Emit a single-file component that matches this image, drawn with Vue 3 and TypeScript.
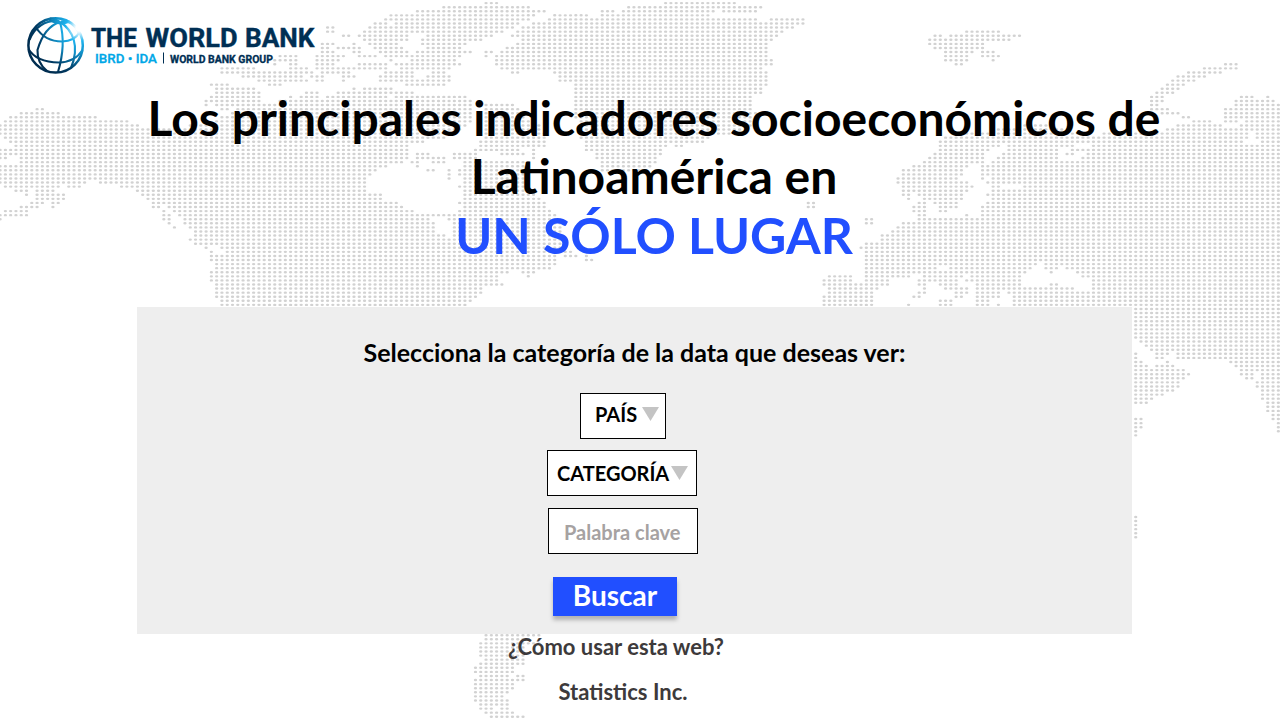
<script setup lang="ts">
import { ref } from 'vue'

const keyword = ref('')

// Dotted world map: each entry is "row: from-to from-to ..." where the
// from/to values are horizontal extents of land on that row.
const land = `
0: 487-497 665-735
1: 444-528 628-760
2: 417-545 603-613 625-712 724-756
3: 391-533 554-587 603-618 623-708
4: 385-517 523-528 550-757 772-803
5: 375-388 397-517 533-803
6: 328-333 370-390 397-510 523-793
7: 328-333 364-502 517-783 967-998
8: 344-349 359-407 428-492 512-777 935-940 951-1020
9: 364-407 423-482 522-772 930-1010
10: 323-333 354-354 370-397 423-465 517-767 930-982
11: 323-328 338-357 375-402 428-458 507-767 935-982
12: 323-333 354-359 380-407 417-470 487-492 502-767 945-972 982-993
13: 280-297 317-333 338-344 359-375 385-402 407-458 487-487 497-767 945-967 982-998
14: 275-297 317-338 391-391 412-453 497-772 945-967 993-993
15: 275-275 290-297 317-333 359-387 397-460 497-772 956-961 1226-1237
16: 222-253 290-307 317-354 359-387 403-450 502-762 1204-1237
17: 222-267 275-312 323-349 385-412 433-443 512-518 555-767 1189-1220
18: 243-302 310-323 344-353 380-412 428-450 560-767 1178-1205
19: 260-307 317-323 344-344 380-448 560-767 1173-1194
20: 211-227 269-280 407-445 575-767 1167-1183
21: 217-255 354-354 365-392 575-762 1162-1178
22: 217-260 307-318 338-359 365-392 397-412 575-762 1157-1167 1173-1173
23: 212-260 291-291 302-318 328-338 344-385 397-448 453-465 575-752 1152-1162 1242-1252 1268-1268
24: 206-260 278-470 575-752 1152-1162 1237-1257 1263-1273
25: 206-206 217-260 265-470 485-510 575-752 1152-1157 1237-1257 1263-1280
26: 37-42 222-228 238-470 485-515 575-752 1152-1167 1226-1280
27: 22-58 235-470 485-520 575-757 1162-1178 1226-1242 1247-1280
28: 11-97 222-470 485-525 575-757 1183-1190 1226-1280
29: 5-128 217-470 485-530 580-757 1193-1210 1226-1237 1247-1280
30: 0-138 190-465 485-540 580-752 1025-1050 1178-1220 1242-1280
31: 0-460 485-540 580-742 1000-1060 1167-1280
32: 0-455 485-545 580-730 960-1090 1104-1247 1257-1280
33: 5-445 485-545 580-710 945-1247 1257-1280
34: 11-425 480-545 585-700 942-1243 1262-1280
35: 16-407 482-545 587-665 677-682 940-1000 1007-1070 1093-1280
36: 0-16 22-407 477-520 533-533 587-662 940-987 1010-1052 1057-1057 1073-1085 1088-1280
37: 0-16 22-408 417-427 453-475 502-523 533-533 597-662 935-985 1003-1057 1067-1073 1088-1280
38: 0-5 22-408 417-417 422-443 453-475 533-533 597-657 930-982 997-1057 1083-1280
39: 22-400 412-417 433-443 463-530 602-657 925-982 993-1280
40: 0-387 417-417 463-530 602-651 913-967 982-1280
41: 0-375 428-433 448-448 460-530 603-640 903-962 982-1280
42: 0-370 448-448 458-530 903-961 982-1280
43: 0-365 448-448 463-530 898-956 982-982 993-1280
44: 0-86 100-365 463-525 898-967 988-1280
45: 5-60 68-80 122-365 458-525 903-972 993-1000 1023-1280
46: 16-27 37-53 138-363 463-530 903-967 993-1280
47: 27-27 37-63 143-380 463-535 903-908 918-961 988-1280
48: 37-63 148-380 463-540 908-908 923-961 993-1280
49: 32-42 52-58 153-158 164-397 460-543 808-813 918-923 935-957 988-1280
50: 22-37 53-53 153-158 169-402 463-543 808-813 913-925 940-957 982-1280
51: 5-27 164-164 174-412 457-550 913-923 940-945 982-1280
52: 0-27 164-170 180-443 448-553 918-923 967-967 982-1280
53: 0-0 164-170 185-427 448-553 867-872 918-933 940-1280
54: 170-170 185-432 453-560 867-872 903-1280
55: 175-175 190-432 453-560 897-1280
56: 195-433 453-560 892-1280
57: 195-443 453-560 882-1280
58: 190-560 882-1280
59: 195-560 867-1280
60: 206-206 222-560 862-862 867-1280
61: 211-211 227-570 867-1280
62: 211-211 217-553 565-577 587-587 867-1280
63: 211-553 587-592 867-1280
64: 217-553 867-1037 1047-1057 1063-1280
65: 217-497 502-548 867-935 950-1032 1047-1057 1068-1280
66: 211-507 523-533 867-920 925-1025 1052-1052 1078-1280
67: 211-497 528-528 830-852 867-885 892-910 923-961 972-1020 1083-1280
68: 211-497 823-852 867-888 918-935 940-956 967-1020 1093-1280
69: 217-502 823-852 857-888 918-923 940-956 977-1020 1052-1057 1093-1280
70: 217-480 830-877 923-923 945-967 977-1073 1093-1280
71: 217-482 830-873 918-925 956-967 977-1000 1007-1082 1088-1280
72: 217-477 823-873 913-920 956-961 977-997 1015-1280
73: 222-472 823-873 940-952 977-987 1015-1280
74: 222-465 823-872 908-908 940-952 977-988 998-998 1015-1280
75: 1135-1280
76: 1135-1280
77: 1135-1280
78: 1135-1280
79: 1135-1280
80: 1135-1280
81: 1135-1280
82: 1135-1280
83: 1141-1280
84: 1146-1280
85: 1151-1280
86: 1136-1136 1157-1167 1178-1280
87: 1136-1136 1157-1162 1178-1280
88: 1136-1141 1167-1167 1231-1280
89: 1136-1146 1157-1173 1236-1280
90: 1136-1183 1241-1280
91: 1136-1189 1241-1252 1262-1280
92: 1136-1183 1247-1252 1262-1280
93: 1136-1178 1257-1280
94: 1136-1178 1257-1280
95: 1136-1173 1262-1280
96: 1136-1162 1262-1280
97: 1136-1152 1262-1280
98: 1136-1146 1268-1280
99: 1268-1280
100: 1268-1280
101: 1273-1280
102: 1136-1141 1273-1280
103: 1136-1141 1278-1280
104: 1136-1141 1278-1280
105: 1136-1136 1278-1280
106: 1136-1136
126: 1136-1136
127: 1136-1136
128: 1136-1136
129: 1136-1136
130: 1136-1136
131: 1136-1136
155: 486-540
156: 486-530
157: 481-540
158: 481-525
159: 481-525
160: 481-523
161: 486-523
162: 481-523
163: 475-513
164: 475-513
165: 481-508 517-523
166: 475-523
167: 475-513
168: 475-513
169: 475-508
170: 475-502
171: 475-508
172: 481-508
173: 481-492 502-508
174: 486-513
175: 492-508 513-523`

const STEP_X = 5.282
const STEP_Y = 4.078

function buildDots(source: string): string {
  let d = ''
  for (const line of source.trim().split('\n')) {
    const [row, runs] = line.split(': ')
    const y = 3.1 + STEP_Y * Number(row)
    for (const run of runs.split(' ')) {
      const [from, to] = run.split('-').map(Number)
      for (let c = Math.round(from / STEP_X); c <= Math.round(to / STEP_X); c++) {
        const x = 0.1 + STEP_X * c
        d += `M${(x - 1.65).toFixed(2)} ${y.toFixed(2)}a1.65 1.2 0 1 0 3.3 0a1.65 1.2 0 1 0-3.3 0z`
      }
    }
  }
  return d
}

const dots = buildDots(land)
</script>

<template>
  <main class="page">
    <svg class="map" viewBox="0 0 1280 720" aria-hidden="true"><path :d="dots" /></svg>

    <header class="brand">
      <svg class="logo" viewBox="0 0 320 80" role="img" aria-label="The World Bank">
        <defs>
          <radialGradient id="globe" gradientUnits="userSpaceOnUse" cx="79" cy="28" r="52">
            <stop offset="0.06" stop-color="#ffffff" />
            <stop offset="0.14" stop-color="#a5e2fa" />
            <stop offset="0.26" stop-color="#1fb3ee" />
            <stop offset="0.48" stop-color="#1090c8" />
            <stop offset="0.82" stop-color="#003a62" />
            <stop offset="1" stop-color="#002d50" />
          </radialGradient>
        </defs>
        <g fill="none" stroke="url(#globe)" stroke-width="2.1">
          <circle cx="55.6" cy="45.4" r="27.2" stroke-width="2.5" />
          <path d="M60 22C47 26 41 38 37.500 50Q37 63 47 71" />
          <path d="M58 21C46 20 34 27 29.500 40" />
          <path d="M60 22C64.500 38 62.500 57 58 72" />
          <path d="M60 22C73 30 80 46 71 68" />
          <path d="M61 21.500C68 19.500 75 25 79 33" />
          <path d="M60 22Q55 18 50 18.500" />
          <path d="M36 27.500Q45 41.500 62 41.500Q75 41 79.500 32" />
          <path d="M28.500 49Q36 62 59 62.500Q75 62 82.500 50" />
          <path d="M49 19.500Q58 26 70 21.500" />
        </g>
        <g font-family="Roboto, 'Liberation Sans', sans-serif" font-weight="700">
          <g font-size="25.2" fill="#002f54" stroke="#002f54" stroke-width="0.4">
            <text x="91" y="47.3" textLength="46" lengthAdjust="spacingAndGlyphs">THE</text>
            <text x="145.500" y="47.3" textLength="92" lengthAdjust="spacingAndGlyphs">WORLD</text>
            <text x="245" y="47.3" textLength="69.500" lengthAdjust="spacingAndGlyphs">BANK</text>
          </g>
          <text x="95" y="63" font-size="13" font-weight="500" fill="#00a7e7" stroke="#00a7e7" stroke-width="0.3" textLength="62" lengthAdjust="spacingAndGlyphs">IBRD • IDA</text>
          <text x="170" y="63" font-size="10" fill="#002f54" stroke="#002f54" stroke-width="0.3" textLength="103" lengthAdjust="spacingAndGlyphs">WORLD BANK GROUP</text>
        </g>
        <path d="M163.500 52.500v11" stroke="#002f54" stroke-width="1" />
      </svg>
    </header>

    <h1 class="title">
      <span>Los principales indicadores socioeconómicos de</span>
      <span>Latinoamérica en</span>
      <span class="accent">UN SÓLO LUGAR</span>
    </h1>

    <section class="panel">
      <h2 class="prompt">Selecciona la categoría de la data que deseas ver:</h2>
      <button class="field country" type="button">
        <span>PAÍS</span>
        <svg class="arrow" viewBox="0 0 17 14"><path d="M0 0h17l-8.500 14z" /></svg>
      </button>
      <button class="field category" type="button">
        <span>CATEGORÍA</span>
        <svg class="arrow" viewBox="0 0 17 14"><path d="M0 0h17l-8.500 14z" /></svg>
      </button>
      <input v-model="keyword" class="field keyword" type="text" placeholder="Palabra clave" />
      <button class="search" type="button">Buscar</button>
    </section>

    <footer class="foot">
      <a class="help">¿Cómo usar esta web?</a>
      <span class="company">Statistics Inc.</span>
    </footer>
  </main>
</template>

<style>
body {
  margin: 0;
  background: #fff;
}
</style>

<style scoped>
.page {
  position: relative;
  width: 1280px;
  height: 720px;
  overflow: hidden;
  background: #fff;
  font-family: Lato, Carlito, sans-serif;
  font-weight: 700;
  color: #000;
}
.map {
  position: absolute;
  inset: 0;
  width: 1280px;
  height: 720px;
  fill: #d2d2d2;
}
.brand,
.title,
.panel,
.foot {
  position: relative;
}
.brand {
  height: 80px;
}
.logo {
  display: block;
  width: 320px;
  height: 80px;
}
.title {
  display: flex;
  flex-direction: column;
  align-items: center;
  width: 1308px;
  height: 227px;
  margin: 0;
  padding-top: 9px;
  box-sizing: border-box;
  font-size: 48px;
  line-height: 58px;
  white-space: nowrap;
}
.accent {
  margin-top: 1px;
  color: #214fff;
  font-size: 50px;
}
.panel {
  display: flex;
  flex-direction: column;
  align-items: center;
  box-sizing: border-box;
  width: 995px;
  height: 327px;
  margin-left: 137px;
  padding-top: 30px;
  background: #eee;
}
.prompt {
  margin: 0 0 26px;
  font-size: 25px;
  line-height: 30px;
}
.field {
  display: flex;
  align-items: center;
  box-sizing: border-box;
  height: 46px;
  padding: 0;
  border: 1px solid #000;
  border-radius: 0;
  background: #fff;
  color: #000;
  font: inherit;
  font-size: 20px;
  line-height: 24px;
  white-space: nowrap;
}
.arrow {
  flex: none;
  width: 17px;
  height: 14px;
  fill: #c4c4c4;
}
.country {
  width: 86px;
  margin: 0 23px 11px 0;
  padding: 0 0 4px 14px;
  gap: 4.5px;
}
.category {
  width: 150px;
  margin: 0 25px 12px 0;
  padding-left: 9px;
  gap: 1.5px;
}
.keyword {
  width: 150px;
  margin-right: 23px;
  padding: 2px 0 0 15px;
  outline: none;
}
.keyword::placeholder {
  color: #a6a2a2;
  opacity: 1;
}
.search {
  width: 124px;
  height: 39px;
  margin: 23px 39px 0 0;
  padding: 0 0 2px;
  border: 0;
  background: #214fff;
  box-shadow: 0 4px 4px rgba(0, 0, 0, 0.25);
  color: #fff;
  font: inherit;
  font-size: 28px;
  line-height: 37px;
}
.foot {
  display: flex;
  flex-direction: column;
  align-items: center;
  width: 1232px;
  color: #3d3a3b;
  font-size: 22px;
  line-height: 26px;
}
.company {
  margin: 19px 0 0 14px;
}
</style>
